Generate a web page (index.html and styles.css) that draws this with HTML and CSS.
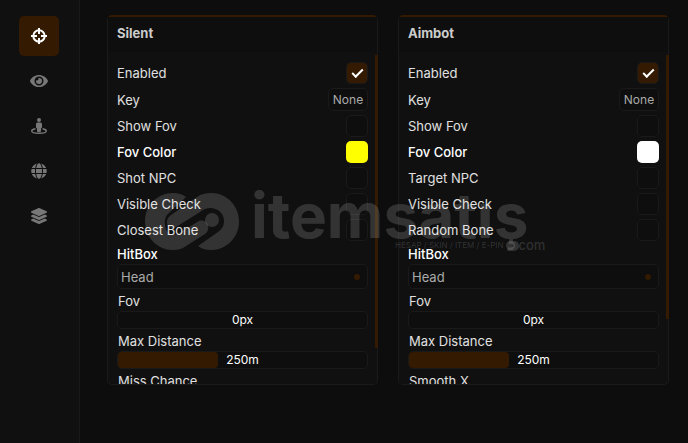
FILE: index.html
```html
<!DOCTYPE html>
<html lang="en">
<head>
  <meta charset="UTF-8" />
  <meta name="viewport" content="width=device-width, initial-scale=1.0"/>
  <title>Settings</title>
  <link rel="stylesheet" href="styles.css">
</head>
<body>
  <div class="app">
    <!-- Sidebar -->
    <nav class="sidebar">
      <button class="nav-btn active" aria-label="Aim">
        <svg width="16" height="16" viewBox="0 0 16 16" fill="none" stroke="currentColor" stroke-width="2">
          <circle cx="8" cy="8" r="5.7"/>
          <path d="M8 0v6M8 10v6M0 8h6M10 8h6"/>
        </svg>
      </button>
      <button class="nav-btn" aria-label="Visuals">
        <svg width="18" height="16" viewBox="0 0 576 512" fill="currentColor"><path d="M572.52 241.4C518.29 135.59 410.93 64 288 64S57.68 135.64 3.48 241.41a32.35 32.35 0 0 0 0 29.19C57.71 376.41 165.07 448 288 448s230.32-71.64 284.52-177.41a32.35 32.35 0 0 0 0-29.19zM288 400a144 144 0 1 1 144-144 143.93 143.93 0 0 1-144 144zm0-240a95.31 95.31 0 0 0-25.31 3.79 47.85 47.85 0 0 1-66.9 66.9A95.78 95.78 0 1 0 288 160z"/></svg>
      </button>
      <button class="nav-btn" aria-label="Player">
        <svg width="16" height="16" viewBox="0 0 16 16" fill="currentColor">
          <circle cx="8" cy="2" r="2"/>
          <path d="M6.5 4.5h3a1.5 1.5 0 0 1 1.5 1.5v3.2a1 1 0 0 1-1 1V13a1 1 0 0 1-1 1H7a1 1 0 0 1-1-1v-2.8a1 1 0 0 1-1-1V6a1.5 1.5 0 0 1 1.5-1.5z"/>
          <path d="M4.5 10.8C2.2 11.2.7 12 .7 12.9c0 1.3 3.2 2.3 7.3 2.3s7.3-1 7.3-2.3c0-.9-1.5-1.7-3.8-2.1" fill="none" stroke="currentColor" stroke-width="1.4"/>
        </svg>
      </button>
      <button class="nav-btn" aria-label="World">
        <svg width="16" height="16" viewBox="0 0 496 512" fill="currentColor"><path d="M336.5 160C322 70.7 287.8 8 248 8s-74 62.7-88.5 152h177zM152 256c0 22.2 1.2 43.5 3.3 64h185.3c2.1-20.5 3.3-41.8 3.3-64s-1.2-43.5-3.3-64H155.3c-2.1 20.5-3.3 41.8-3.3 64zm324.7-96c-28.6-67.9-86.5-120.4-158-141.6 24.4 33.8 41.2 84.7 50 141.6h108zM177.2 18.4C105.8 39.6 47.8 92.1 19.3 160h108c8.7-56.9 25.5-107.8 49.9-141.6zM487.4 192H372.7c2.1 21 3.3 42.5 3.3 64s-1.2 43-3.3 64h114.6c5.5-20.5 8.6-41.8 8.6-64s-3.1-43.5-8.5-64zM120 256c0-21.5 1.2-43 3.3-64H8.6C3.2 212.5 0 233.8 0 256s3.2 43.5 8.6 64h114.6c-2-21-3.2-42.5-3.2-64zm39.5 96c14.5 89.3 48.7 152 88.5 152s74-62.7 88.5-152h-177zm159.3 141.6c71.4-21.2 129.4-73.7 158-141.6h-108c-8.8 56.9-25.6 107.8-50 141.6zM19.3 352c28.6 67.9 86.5 120.4 158 141.6-24.4-33.8-41.2-84.7-50-141.6h-108z"/></svg>
      </button>
      <button class="nav-btn" aria-label="Misc">
        <svg width="16" height="16" viewBox="0 0 512 512" fill="currentColor"><path d="M12.41 148.02l232.94 105.67c6.8 3.09 14.49 3.09 21.29 0l232.94-105.67c16.55-7.51 16.55-32.52 0-40.03L266.65 2.31a25.607 25.607 0 0 0-21.29 0L12.41 107.98c-16.55 7.51-16.55 32.53 0 40.04zm487.18 88.28l-58.09-26.33-161.64 73.27c-7.56 3.43-15.59 5.17-23.86 5.17s-16.29-1.74-23.86-5.17L70.51 209.97l-58.1 26.33c-16.55 7.5-16.55 32.5 0 40l232.94 105.59c6.8 3.08 14.49 3.08 21.29 0L499.59 276.3c16.55-7.5 16.55-32.5 0-40zm0 127.8l-57.87-26.23-161.86 73.37c-7.56 3.43-15.59 5.17-23.86 5.17s-16.29-1.74-23.86-5.17L70.29 337.87 12.41 364.1c-16.55 7.5-16.55 32.5 0 40l232.94 105.59c6.8 3.08 14.49 3.08 21.29 0L499.59 404.1c16.55-7.5 16.55-32.5 0-40z"/></svg>
      </button>
    </nav>

    <main class="content">
      <!-- Silent -->
      <section class="panel">
        <h2>Silent</h2>
        <div class="panel-body">
          <div class="row"><label for="s-enabled">Enabled</label><input type="checkbox" id="s-enabled" checked></div>
          <div class="row"><span>Key</span><button class="key-btn">None</button></div>
          <div class="row"><label for="s-show">Show Fov</label><input type="checkbox" id="s-show"></div>
          <div class="row strong"><label for="s-color">Fov Color</label><input type="color" id="s-color" value="#ffff00"></div>
          <div class="row"><label for="s-npc">Shot NPC</label><input type="checkbox" id="s-npc"></div>
          <div class="row"><label for="s-visible">Visible Check</label><input type="checkbox" id="s-visible"></div>
          <div class="row"><label for="s-bone">Closest Bone</label><input type="checkbox" id="s-bone"></div>
          <div class="field strong">
            <label for="s-hitbox">HitBox</label>
            <div class="select"><select id="s-hitbox"><option>Head</option></select></div>
          </div>
          <div class="field">
            <label for="s-fov">Fov</label>
            <div class="slider">
              <div class="fill" style="width: 0%"></div>
              <output for="s-fov">0px</output>
              <input type="range" id="s-fov" min="0" max="500" value="0">
            </div>
          </div>
          <div class="field">
            <label for="s-dist">Max Distance</label>
            <div class="slider">
              <div class="fill" style="width: 40%"></div>
              <output for="s-dist">250m</output>
              <input type="range" id="s-dist" min="0" max="625" value="250">
            </div>
          </div>
          <div class="field">
            <label for="s-miss">Miss Chance</label>
            <div class="slider">
              <input type="range" id="s-miss" min="0" max="100" value="0">
            </div>
          </div>
        </div>
        <div class="scrollbar"><div class="thumb" style="height: 90%"></div></div>
      </section>

      <!-- Aimbot -->
      <section class="panel">
        <h2>Aimbot</h2>
        <div class="panel-body">
          <div class="row"><label for="a-enabled">Enabled</label><input type="checkbox" id="a-enabled" checked></div>
          <div class="row"><span>Key</span><button class="key-btn">None</button></div>
          <div class="row"><label for="a-show">Show Fov</label><input type="checkbox" id="a-show"></div>
          <div class="row strong"><label for="a-color">Fov Color</label><input type="color" id="a-color" value="#ffffff"></div>
          <div class="row"><label for="a-npc">Target NPC</label><input type="checkbox" id="a-npc"></div>
          <div class="row"><label for="a-visible">Visible Check</label><input type="checkbox" id="a-visible"></div>
          <div class="row"><label for="a-bone">Random Bone</label><input type="checkbox" id="a-bone"></div>
          <div class="field strong">
            <label for="a-hitbox">HitBox</label>
            <div class="select"><select id="a-hitbox"><option>Head</option></select></div>
          </div>
          <div class="field">
            <label for="a-fov">Fov</label>
            <div class="slider">
              <div class="fill" style="width: 0%"></div>
              <output for="a-fov">0px</output>
              <input type="range" id="a-fov" min="0" max="500" value="0">
            </div>
          </div>
          <div class="field">
            <label for="a-dist">Max Distance</label>
            <div class="slider">
              <div class="fill" style="width: 40%"></div>
              <output for="a-dist">250m</output>
              <input type="range" id="a-dist" min="0" max="625" value="250">
            </div>
          </div>
          <div class="field">
            <label for="a-smooth">Smooth X</label>
            <div class="slider">
              <input type="range" id="a-smooth" min="0" max="100" value="0">
            </div>
          </div>
        </div>
        <div class="scrollbar"><div class="thumb" style="height: 81%"></div></div>
      </section>
    </main>

    <!-- Watermark -->
    <div class="watermark">
      <svg width="94" height="57" viewBox="0 0 94 57" fill="currentColor">
        <path d="M41 4C37 1 33 0 28 0 12 0 0 13 0 28.5S12 57 28 57c5 0 9-1 13-4l19-12c7-5 2-16-6-13L34 40c-6 4-14 0-14-8-1-6 1-10 5-13z"/>
        <path d="M53 53c4 3 8 4 13 4 16 0 28-13 28-28.5S82 0 66 0c-5 0-10 1-14 4L26 22c-8 6-3 16 5 12l24-15c9-8 24-3 24 9 0 5-2 8-6 11z"/>
        <circle cx="67" cy="27" r="7"/>
      </svg>
      <div class="brand">
        <span class="brand-name">itemsatış</span>
        <span class="brand-sub"><small>HESAP / SKIN / ITEM / E-PIN</small><i></i><b>com</b></span>
      </div>
    </div>
  </div>
</body>
</html>
```
FILE: styles.css
```css
* {
  box-sizing: border-box;
}

body {
  margin: 0;
  background-color: #0d0d0d;
  color: #e0e0e0;
  font-family: Inter, sans-serif;
  font-size: 13px;
}

button,
input,
select {
  font-family: inherit;
  margin: 0;
}

.app {
  position: relative;
  display: flex;
  height: 100vh;
  overflow: hidden;
}

.sidebar {
  display: flex;
  flex-direction: column;
  align-items: center;
  gap: 5px;
  width: 80px;
  padding: 16px 1px 0 0;
  background-color: #101010;
  border-right: 1px solid #1a1a1a;
}

.nav-btn {
  display: flex;
  align-items: center;
  justify-content: center;
  width: 40px;
  height: 40px;
  padding: 0;
  border: none;
  border-radius: 5px;
  background: none;
  color: #777;
  cursor: pointer;
}

.nav-btn.active {
  background-color: #331a00;
  color: #fff;
}

.content {
  flex: 1;
  display: flex;
  gap: 20px;
  padding: 15px 19px 58px 27px;
}

.panel {
  position: relative;
  flex: 1;
  display: flex;
  flex-direction: column;
  min-width: 0;
  background-color: #101010;
  border: 1px solid #1a1a1a;
  border-top: 2px solid #331a00;
  border-radius: 5px;
}

.panel h2 {
  margin: 0;
  padding: 0 9px 2px;
  background-color: #0e0e0e;
  color: #ccc;
  font-size: 13px;
  font-weight: 700;
  line-height: 33px;
}

.panel-body {
  flex: 1;
  display: flex;
  flex-direction: column;
  gap: 4px;
  min-height: 0;
  padding: 10px 9px 0;
  overflow: hidden;
}

.row {
  display: flex;
  flex-shrink: 0;
  align-items: center;
  justify-content: space-between;
}

.strong label {
  color: #fff;
  font-weight: 500;
}

input[type="checkbox"] {
  appearance: none;
  display: grid;
  place-items: center;
  width: 22px;
  height: 22px;
  border: 1px solid #1a1a1a;
  border-radius: 5px;
  background-color: #0e0e0e;
}

input[type="checkbox"]:checked {
  background-color: #331a00;
}

input[type="checkbox"]:checked::before {
  content: "";
  width: 9px;
  height: 4px;
  margin-bottom: 3px;
  border: solid #fff;
  border-width: 0 0 2px 2px;
  transform: rotate(-45deg);
}

input[type="color"] {
  appearance: none;
  width: 22px;
  height: 22px;
  padding: 0;
  border: none;
  border-radius: 5px;
  background: none;
  overflow: hidden;
}

input[type="color"]::-webkit-color-swatch-wrapper {
  padding: 0;
}

input[type="color"]::-webkit-color-swatch {
  border: none;
}

.key-btn {
  width: 40px;
  height: 23px;
  padding: 0;
  border: 1px solid #1a1a1a;
  border-radius: 5px;
  background-color: #0e0e0e;
  color: #aaa;
  font-size: 12px;
}

.field {
  display: flex;
  flex-shrink: 0;
  flex-direction: column;
  margin-bottom: -2px;
}

.field label {
  padding-left: 1px;
  line-height: 20px;
}

.field.strong label {
  padding-left: 0;
  line-height: 19px;
}

.select {
  position: relative;
}

.select::after {
  content: "";
  position: absolute;
  top: 10px;
  right: 8px;
  width: 6px;
  height: 6px;
  border-radius: 50%;
  background-color: #331a00;
}

.select select {
  appearance: none;
  width: 100%;
  height: 25px;
  padding: 0 3px;
  border: 1px solid #1a1a1a;
  border-radius: 5px;
  background-color: #0e0e0e;
  color: #aaa;
  font-size: 13px;
}

.slider {
  position: relative;
  display: grid;
  height: 18px;
  border: 1px solid #1a1a1a;
  border-radius: 5px;
  background-color: #0e0e0e;
}

.slider > * {
  grid-area: 1 / 1;
}

.slider .fill {
  border-radius: 4px;
  background-color: #331a00;
}

.slider output {
  color: #fff;
  font-size: 12px;
  line-height: 16px;
  text-align: center;
}

.slider input {
  width: 100%;
  height: 16px;
  opacity: 0;
}

.scrollbar {
  position: absolute;
  top: 38px;
  right: -1px;
  bottom: 3px;
  width: 3px;
}

.scrollbar .thumb {
  background-color: #331a00;
}

.watermark {
  position: absolute;
  top: 193px;
  left: 145px;
  display: flex;
  align-items: flex-start;
  gap: 12px;
  color: rgba(255, 255, 255, 0.15);
  pointer-events: none;
}

.brand {
  display: flex;
  flex-direction: column;
}

.brand-name {
  font-size: 62px;
  font-weight: 700;
  line-height: 46px;
}

.brand-sub {
  display: flex;
  align-items: center;
  gap: 3px;
  padding-left: 144px;
}

.brand-sub small {
  font-size: 8px;
}

.brand-sub i {
  width: 9px;
  height: 9px;
  border-radius: 50%;
  background-color: currentColor;
}

.brand-sub b {
  font-size: 13px;
  font-weight: 500;
  line-height: 12px;
}
```
